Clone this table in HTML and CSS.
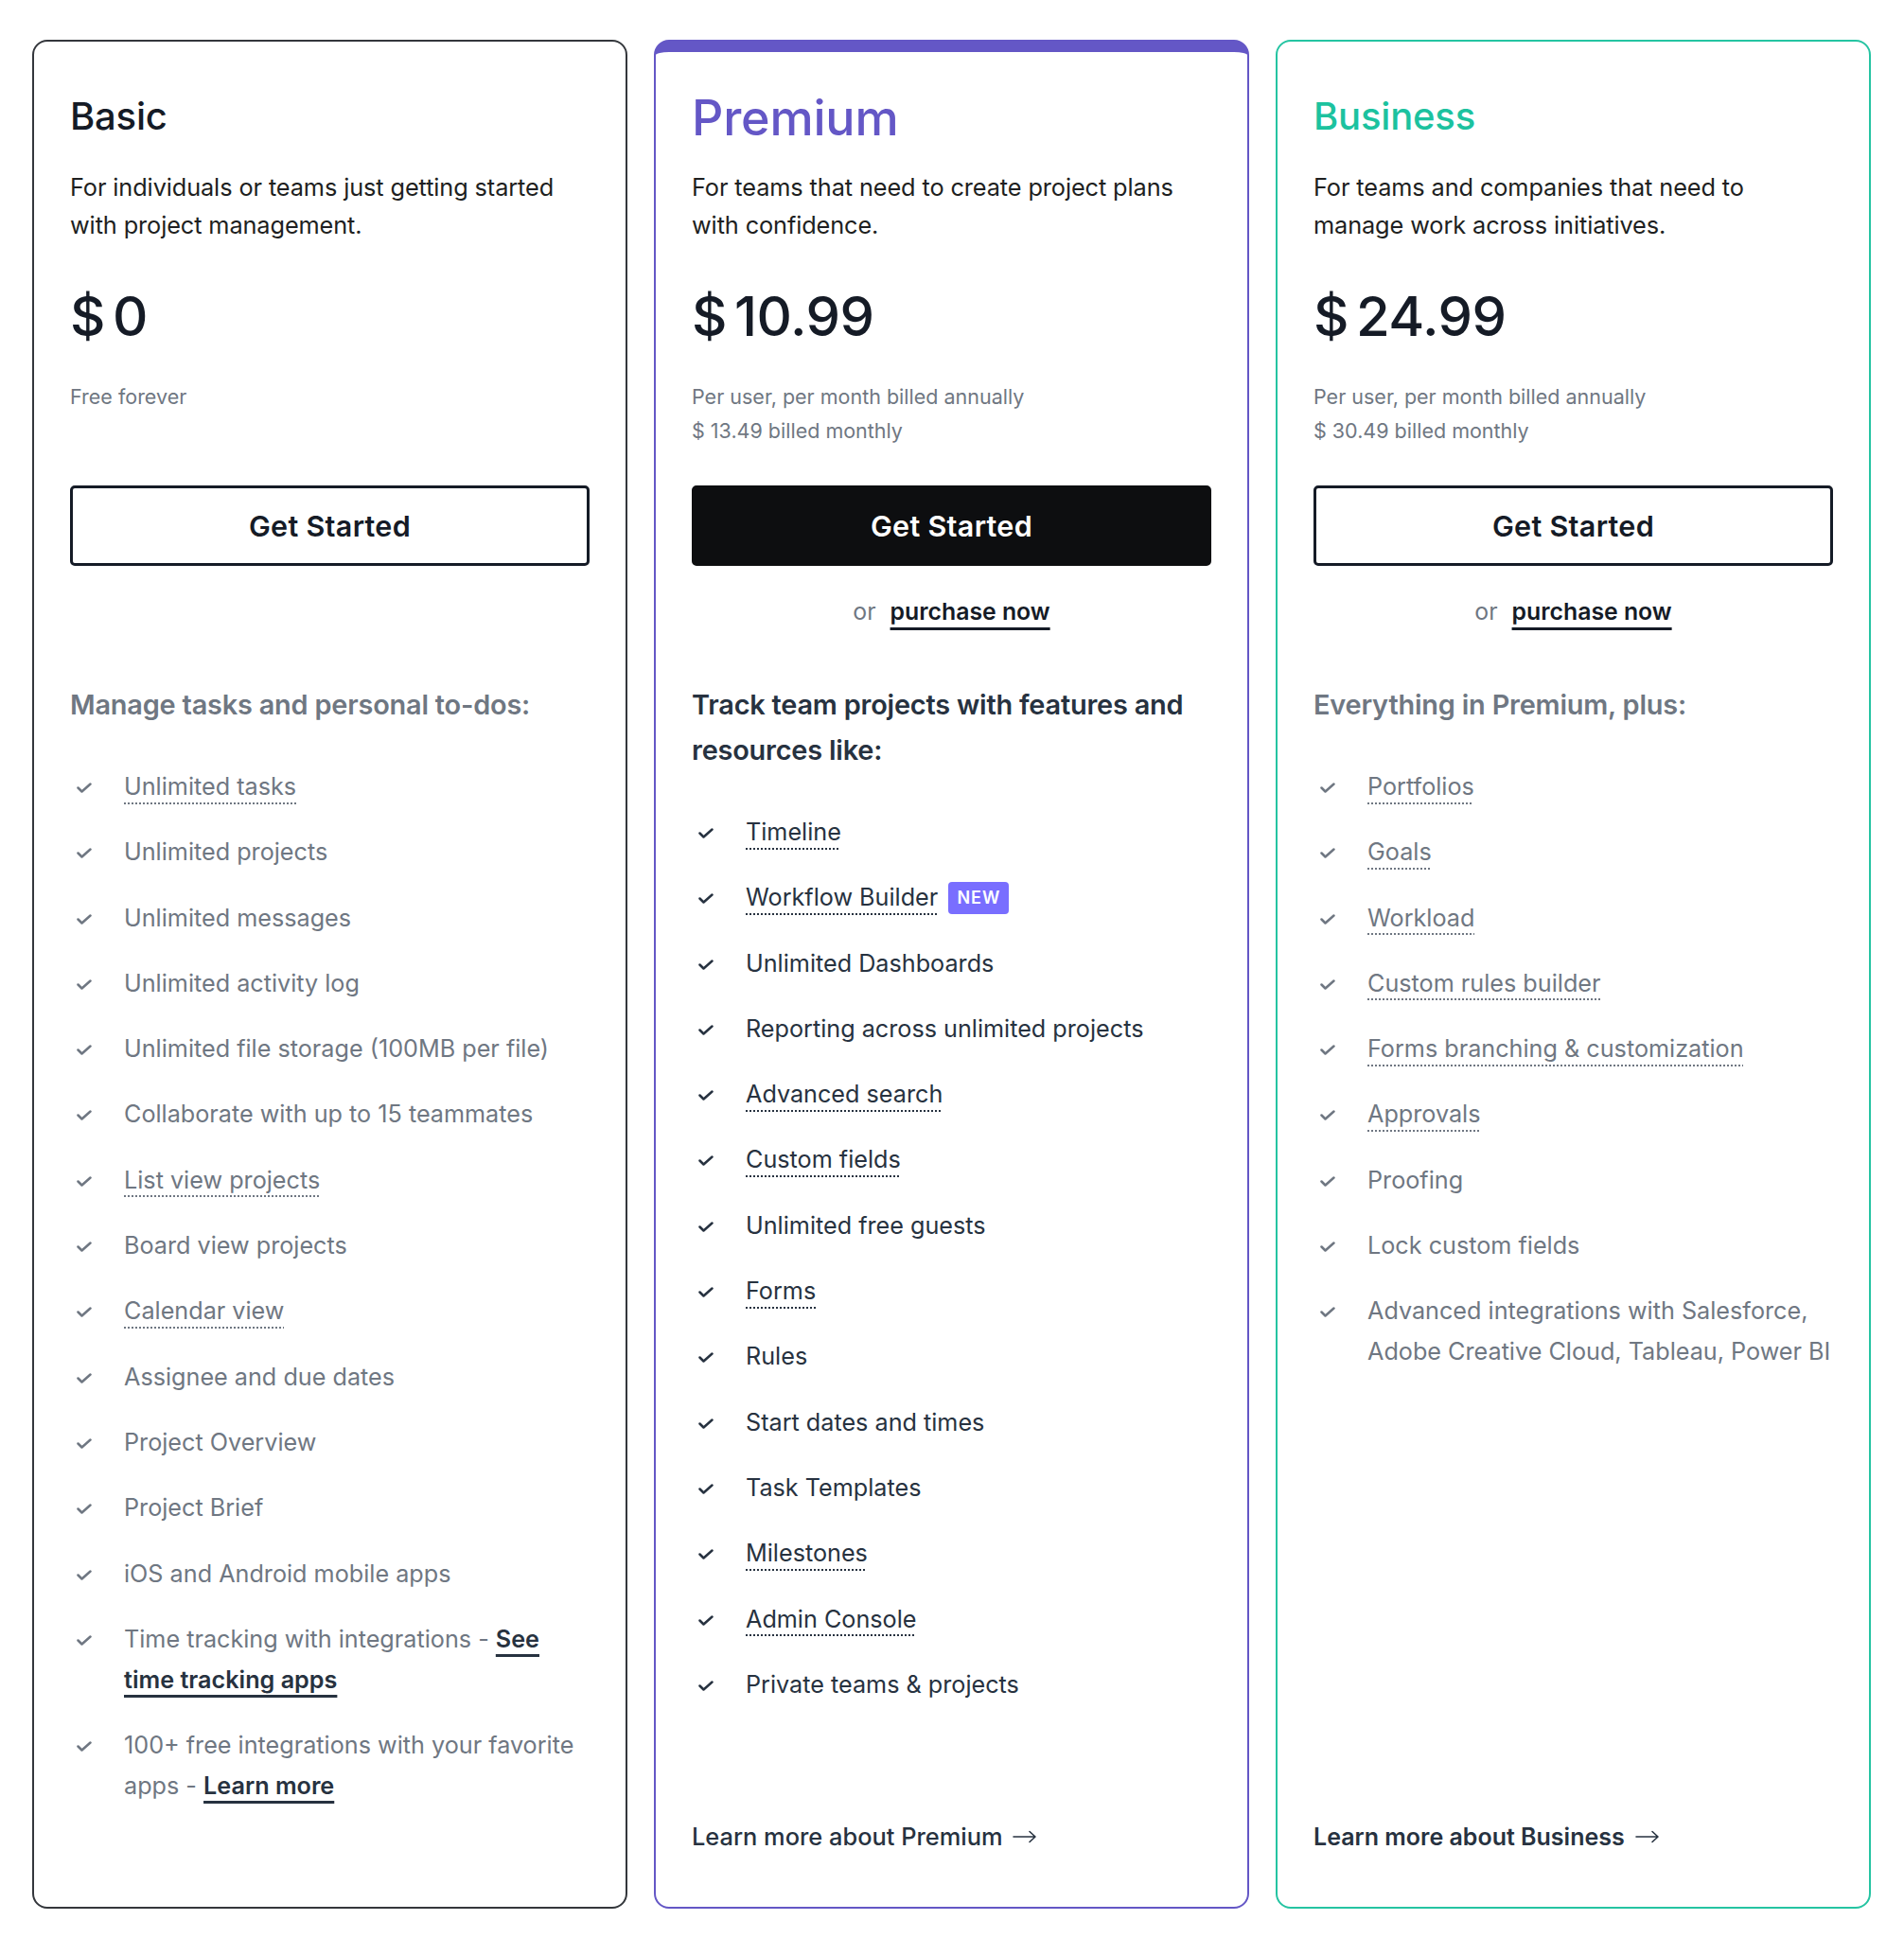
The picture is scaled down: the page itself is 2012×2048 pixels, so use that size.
FILE: index.html
```html
<!DOCTYPE html>
<html lang="en">
<head>
<meta charset="utf-8">
<title>Pricing</title>
<link rel="stylesheet" href="styles.css">
</head>
<body>
<main class="plans">
  <section class="card card-basic">
    <h2 class="plan-name">Basic</h2>
    <p class="plan-desc">For individuals or teams just getting started<br>with project management.</p>
    <div class="price"><span class="cur">$</span>0</div>
    <p class="price-note">Free forever</p>
    <a class="btn btn-outline" href="#">Get Started</a>
    <div class="purchase"></div>
    <h3 class="feat-head">Manage tasks and personal to-dos:</h3>
    <ul class="features">
      <li><svg class="chk" viewBox="0 0 16 12"><path d="M1.5 5.5 L5.5 9.5 L14.5 1.5"/></svg><span><span class="dot">Unlimited tasks</span></span></li>
      <li><svg class="chk" viewBox="0 0 16 12"><path d="M1.5 5.5 L5.5 9.5 L14.5 1.5"/></svg><span>Unlimited projects</span></li>
      <li><svg class="chk" viewBox="0 0 16 12"><path d="M1.5 5.5 L5.5 9.5 L14.5 1.5"/></svg><span>Unlimited messages</span></li>
      <li><svg class="chk" viewBox="0 0 16 12"><path d="M1.5 5.5 L5.5 9.5 L14.5 1.5"/></svg><span>Unlimited activity log</span></li>
      <li><svg class="chk" viewBox="0 0 16 12"><path d="M1.5 5.5 L5.5 9.5 L14.5 1.5"/></svg><span>Unlimited file storage (100MB per file)</span></li>
      <li><svg class="chk" viewBox="0 0 16 12"><path d="M1.5 5.5 L5.5 9.5 L14.5 1.5"/></svg><span>Collaborate with up to 15 teammates</span></li>
      <li><svg class="chk" viewBox="0 0 16 12"><path d="M1.5 5.5 L5.5 9.5 L14.5 1.5"/></svg><span><span class="dot">List view projects</span></span></li>
      <li><svg class="chk" viewBox="0 0 16 12"><path d="M1.5 5.5 L5.5 9.5 L14.5 1.5"/></svg><span>Board view projects</span></li>
      <li><svg class="chk" viewBox="0 0 16 12"><path d="M1.5 5.5 L5.5 9.5 L14.5 1.5"/></svg><span><span class="dot">Calendar view</span></span></li>
      <li><svg class="chk" viewBox="0 0 16 12"><path d="M1.5 5.5 L5.5 9.5 L14.5 1.5"/></svg><span>Assignee and due dates</span></li>
      <li><svg class="chk" viewBox="0 0 16 12"><path d="M1.5 5.5 L5.5 9.5 L14.5 1.5"/></svg><span>Project Overview</span></li>
      <li><svg class="chk" viewBox="0 0 16 12"><path d="M1.5 5.5 L5.5 9.5 L14.5 1.5"/></svg><span>Project Brief</span></li>
      <li><svg class="chk" viewBox="0 0 16 12"><path d="M1.5 5.5 L5.5 9.5 L14.5 1.5"/></svg><span>iOS and Android mobile apps</span></li>
      <li><svg class="chk" viewBox="0 0 16 12"><path d="M1.5 5.5 L5.5 9.5 L14.5 1.5"/></svg><span><span class="nw">Time tracking with integrations - <a class="strong-link" href="#">See</a></span><br><a class="strong-link" href="#">time tracking apps</a></span></li>
      <li><svg class="chk" viewBox="0 0 16 12"><path d="M1.5 5.5 L5.5 9.5 L14.5 1.5"/></svg><span><span class="nw">100+ free integrations with your favorite</span><br>apps - <a class="strong-link" href="#">Learn more</a></span></li>
    </ul>
  </section>

  <section class="card card-premium">
    <h2 class="plan-name">Premium</h2>
    <p class="plan-desc">For teams that need to create project plans<br>with confidence.</p>
    <div class="price"><span class="cur">$</span>10.99</div>
    <p class="price-note">Per user, per month billed annually<br>$ 13.49 billed monthly</p>
    <a class="btn btn-solid" href="#">Get Started</a>
    <div class="purchase"><span class="or">or</span> <a href="#">purchase now</a></div>
    <h3 class="feat-head">Track team projects with features and<br>resources like:</h3>
    <ul class="features">
      <li><svg class="chk" viewBox="0 0 16 12"><path d="M1.5 5.5 L5.5 9.5 L14.5 1.5"/></svg><span><span class="dot">Timeline</span></span></li>
      <li><svg class="chk" viewBox="0 0 16 12"><path d="M1.5 5.5 L5.5 9.5 L14.5 1.5"/></svg><span><span class="dot">Workflow Builder</span> <span class="badge">NEW</span></span></li>
      <li><svg class="chk" viewBox="0 0 16 12"><path d="M1.5 5.5 L5.5 9.5 L14.5 1.5"/></svg><span>Unlimited Dashboards</span></li>
      <li><svg class="chk" viewBox="0 0 16 12"><path d="M1.5 5.5 L5.5 9.5 L14.5 1.5"/></svg><span>Reporting across unlimited projects</span></li>
      <li><svg class="chk" viewBox="0 0 16 12"><path d="M1.5 5.5 L5.5 9.5 L14.5 1.5"/></svg><span><span class="dot">Advanced search</span></span></li>
      <li><svg class="chk" viewBox="0 0 16 12"><path d="M1.5 5.5 L5.5 9.5 L14.5 1.5"/></svg><span><span class="dot">Custom fields</span></span></li>
      <li><svg class="chk" viewBox="0 0 16 12"><path d="M1.5 5.5 L5.5 9.5 L14.5 1.5"/></svg><span>Unlimited free guests</span></li>
      <li><svg class="chk" viewBox="0 0 16 12"><path d="M1.5 5.5 L5.5 9.5 L14.5 1.5"/></svg><span><span class="dot">Forms</span></span></li>
      <li><svg class="chk" viewBox="0 0 16 12"><path d="M1.5 5.5 L5.5 9.5 L14.5 1.5"/></svg><span>Rules</span></li>
      <li><svg class="chk" viewBox="0 0 16 12"><path d="M1.5 5.5 L5.5 9.5 L14.5 1.5"/></svg><span>Start dates and times</span></li>
      <li><svg class="chk" viewBox="0 0 16 12"><path d="M1.5 5.5 L5.5 9.5 L14.5 1.5"/></svg><span>Task Templates</span></li>
      <li><svg class="chk" viewBox="0 0 16 12"><path d="M1.5 5.5 L5.5 9.5 L14.5 1.5"/></svg><span><span class="dot">Milestones</span></span></li>
      <li><svg class="chk" viewBox="0 0 16 12"><path d="M1.5 5.5 L5.5 9.5 L14.5 1.5"/></svg><span><span class="dot">Admin Console</span></span></li>
      <li><svg class="chk" viewBox="0 0 16 12"><path d="M1.5 5.5 L5.5 9.5 L14.5 1.5"/></svg><span>Private teams &amp; projects</span></li>
    </ul>
    <a class="learn" href="#">Learn more about Premium <svg class="arrow" viewBox="0 0 26 14"><path d="M1 7 H24 M18 1.5 L24 7 L18 12.5"/></svg></a>
  </section>

  <section class="card card-business">
    <h2 class="plan-name">Business</h2>
    <p class="plan-desc">For teams and companies that need to<br>manage work across initiatives.</p>
    <div class="price"><span class="cur">$</span>24.99</div>
    <p class="price-note">Per user, per month billed annually<br>$ 30.49 billed monthly</p>
    <a class="btn btn-outline" href="#">Get Started</a>
    <div class="purchase"><span class="or">or</span> <a href="#">purchase now</a></div>
    <h3 class="feat-head">Everything in Premium, plus:</h3>
    <ul class="features">
      <li><svg class="chk" viewBox="0 0 16 12"><path d="M1.5 5.5 L5.5 9.5 L14.5 1.5"/></svg><span><span class="dot">Portfolios</span></span></li>
      <li><svg class="chk" viewBox="0 0 16 12"><path d="M1.5 5.5 L5.5 9.5 L14.5 1.5"/></svg><span><span class="dot">Goals</span></span></li>
      <li><svg class="chk" viewBox="0 0 16 12"><path d="M1.5 5.5 L5.5 9.5 L14.5 1.5"/></svg><span><span class="dot">Workload</span></span></li>
      <li><svg class="chk" viewBox="0 0 16 12"><path d="M1.5 5.5 L5.5 9.5 L14.5 1.5"/></svg><span><span class="dot">Custom rules builder</span></span></li>
      <li><svg class="chk" viewBox="0 0 16 12"><path d="M1.5 5.5 L5.5 9.5 L14.5 1.5"/></svg><span><span class="dot">Forms branching &amp; customization</span></span></li>
      <li><svg class="chk" viewBox="0 0 16 12"><path d="M1.5 5.5 L5.5 9.5 L14.5 1.5"/></svg><span><span class="dot">Approvals</span></span></li>
      <li><svg class="chk" viewBox="0 0 16 12"><path d="M1.5 5.5 L5.5 9.5 L14.5 1.5"/></svg><span>Proofing</span></li>
      <li><svg class="chk" viewBox="0 0 16 12"><path d="M1.5 5.5 L5.5 9.5 L14.5 1.5"/></svg><span>Lock custom fields</span></li>
      <li><svg class="chk" viewBox="0 0 16 12"><path d="M1.5 5.5 L5.5 9.5 L14.5 1.5"/></svg><span><span class="nw">Advanced integrations with Salesforce,</span><br><span class="nw">Adobe Creative Cloud, Tableau, Power BI</span></span></li>
    </ul>
    <a class="learn learn-bold" href="#">Learn more about Business <svg class="arrow" viewBox="0 0 26 14"><path d="M1 7 H24 M18 1.5 L24 7 L18 12.5"/></svg></a>
  </section>
</main>
</body>
</html>
```

FILE: styles.css
```css
* { box-sizing: border-box; }

html, body {
  margin: 0;
  padding: 0;
  background: #ffffff;
}

body {
  font-family: "Inter", "Lato", "Liberation Sans", sans-serif;
  color: #1e1f21;
  width: 2012px;
}

.plans {
  display: grid;
  grid-template-columns: repeat(3, 629px);
  column-gap: 28px;
  padding: 42px 35px 31px 34px;
  align-items: stretch;
}

.card {
  display: flex;
  flex-direction: column;
  min-height: 1975px;
  border: 2px solid #34373c;
  border-radius: 16px;
  padding: 51px 38px 56px 38px;
  background: #fff;
}

.card-premium {
  border-color: #6457c6;
  border-top-width: 13px;
  padding-top: 40px;
}

.card-business {
  border-color: #25c4a2;
}

.plan-name {
  margin: 0;
  font-size: 40px;
  line-height: 56px;
  font-weight: 500;
  color: #151b26;
  letter-spacing: -0.2px;
}

.card-premium .plan-name {
  margin-top: 2px;
  font-size: 52px;
  color: #6457c6;
}

.card-business .plan-name {
  color: #1cc29f;
}

.plan-desc {
  margin: 27px 0 0 0;
  font-size: 25.3px;
  line-height: 40px;
  color: #1e1f21;
  letter-spacing: -0.1px;
}

.card-premium .plan-desc {
  margin-top: 25px;
}

.price {
  margin-top: 47px;
  font-size: 58px;
  line-height: 58px;
  font-weight: 500;
  color: #151b26;
  letter-spacing: -0.5px;
}

.cur {
  margin-right: 8px;
}

.price-note {
  margin: 38px 0 0 0;
  min-height: 72px;
  font-size: 21.5px;
  line-height: 36px;
  color: #6f7782;
}

.btn {
  display: flex;
  align-items: center;
  justify-content: center;
  margin-top: 40px;
  height: 85px;
  border-radius: 5px;
  font-size: 30.5px;
  font-weight: 600;
  letter-spacing: 0.3px;
  text-decoration: none;
}

.btn-outline {
  border: 3px solid #151b26;
  color: #151b26;
  background: #fff;
}

.btn-solid {
  background: #0d0e10;
  color: #fff;
  border: 3px solid #0d0e10;
}

.purchase {
  margin-top: 30px;
  height: 36px;
  text-align: center;
  font-size: 24.8px;
  line-height: 36px;
}

.purchase .or {
  color: #6f7782;
  margin-right: 8px;
}

.purchase a {
  color: #151b26;
  font-weight: 600;
  text-decoration: underline;
  text-decoration-thickness: 3px;
  text-underline-offset: 8px;
}

.feat-head {
  margin: 57px 0 0 0;
  font-size: 28.9px;
  line-height: 48px;
  font-weight: 600;
  color: #6f7782;
  letter-spacing: -0.2px;
}

.card-premium .feat-head {
  color: #273240;
}

.features {
  list-style: none;
  margin: 41px 0 0 0;
  padding: 0;
  display: flex;
  flex-direction: column;
  row-gap: 26.3px;
}

.features li {
  display: grid;
  grid-template-columns: 57px 1fr;
  font-size: 25.2px;
  line-height: 43px;
  color: #6f7782;
}

.card-premium .features li {
  color: #273240;
}

.nw {
  white-space: nowrap;
}

.chk {
  width: 16px;
  height: 12px;
  margin: 17px 0 0 7px;
  fill: none;
  stroke: currentColor;
  stroke-width: 2.5;
  stroke-linecap: round;
  stroke-linejoin: round;
}

.dot {
  text-decoration: underline dotted;
  text-decoration-thickness: 1.5px;
  text-underline-offset: 8px;
}

.strong-link {
  color: #273240;
  font-weight: 600;
  text-decoration: underline;
  text-decoration-thickness: 3px;
  text-underline-offset: 7px;
}

.badge {
  display: inline-block;
  margin-left: 4px;
  padding: 0 9px;
  height: 34px;
  line-height: 34px;
  vertical-align: 2px;
  border-radius: 4px;
  background: #796eff;
  color: #fff;
  font-size: 18px;
  font-weight: 600;
  letter-spacing: 1px;
}

.learn {
  margin-top: auto;
  display: inline-flex;
  align-items: center;
  align-self: flex-start;
  font-size: 25.4px;
  line-height: 36px;
  font-weight: 500;
  color: #273240;
  text-decoration: none;
}

.learn-bold {
  font-weight: 600;
  font-size: 25px;
}

.arrow {
  width: 26px;
  height: 14px;
  margin-left: 11px;
  fill: none;
  stroke: #273240;
  stroke-width: 1.6;
  stroke-linecap: round;
  stroke-linejoin: round;
}
```
